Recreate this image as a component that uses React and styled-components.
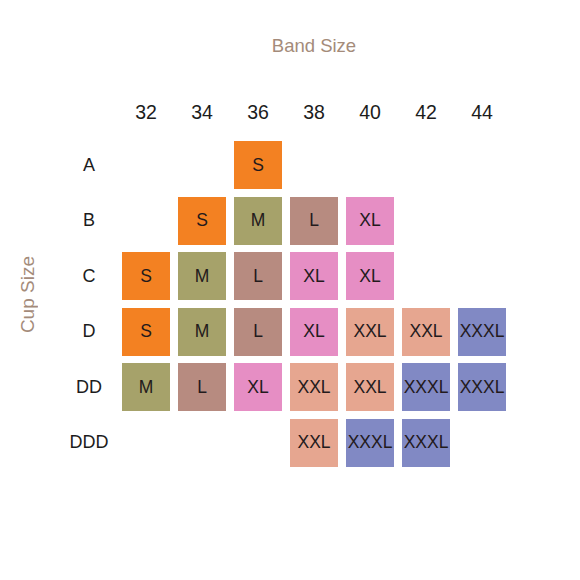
import React from 'react'
import styled, { createGlobalStyle } from 'styled-components'

const GlobalStyle = createGlobalStyle`
body{
  margin: 0;
  background: #fff;
  font-family: 'Liberation Sans', Arial, sans-serif;
}
`

const Page = styled.div`
width: 580px;
height: 580px;
padding-top: 34px;
box-sizing: border-box;
background: #fff;
`

const Title = styled.h2`
margin: 0 0 0 122px;
width: 384px;
height: 24px;
line-height: 24px;
text-align: center;
font-size: 18.5px;
font-weight: 400;
color: #a48b7a;
`

const Body = styled.div`
display: flex;
margin-top: 42px;
`

const CupAxis = styled.div`
width: 56px;
padding-top: 22px;
display: flex;
align-items: center;
justify-content: center;
`

const CupTitle = styled.h2`
margin: 0;
writing-mode: vertical-rl;
transform: rotate(180deg);
font-size: 19px;
font-weight: 400;
color: #a48b7a;
`

const Chart = styled.div`
margin-left: 8px;
display: grid;
grid-template-columns: 50px repeat(7, 48px);
grid-template-rows: 33.5px repeat(6, 48px);
column-gap: 8px;
row-gap: 7.5px;
`

const BandLabel = styled.div`
height: 24px;
line-height: 24px;
text-align: center;
font-size: 19.5px;
color: #1c1c1c;
`

const CupLabel = styled.div`
display: flex;
align-items: center;
justify-content: center;
font-size: 18px;
color: #1c1c1c;
`

const colors = {
  S: '#f38122',
  M: '#a6a26a',
  L: '#b78b80',
  XL: '#e68ec4',
  XXL: '#e6a690',
  XXXL: '#8189c4',
}

const Cell = styled.div`
display: flex;
align-items: center;
justify-content: center;
background: ${props => props.size ? colors[props.size] : 'transparent'};
font-size: 17.5px;
color: #231a1c;
white-space: nowrap;
`

const bands = ['32', '34', '36', '38', '40', '42', '44']

const rows = [
  ['A', [null, null, 'S', null, null, null, null]],
  ['B', [null, 'S', 'M', 'L', 'XL', null, null]],
  ['C', ['S', 'M', 'L', 'XL', 'XL', null, null]],
  ['D', ['S', 'M', 'L', 'XL', 'XXL', 'XXL', 'XXXL']],
  ['DD', ['M', 'L', 'XL', 'XXL', 'XXL', 'XXXL', 'XXXL']],
  ['DDD', [null, null, null, 'XXL', 'XXXL', 'XXXL', null]],
]

const App = () => {
  return (
    <Page>
      <GlobalStyle />
      <Title>Band Size</Title>
      <Body>
        <CupAxis>
          <CupTitle>Cup Size</CupTitle>
        </CupAxis>
        <Chart>
          <div />
          {bands.map(b => <BandLabel key={b}>{b}</BandLabel>)}
          {rows.map(([cup, cells]) => (
            <React.Fragment key={cup}>
              <CupLabel>{cup}</CupLabel>
              {cells.map((size, i) => <Cell key={i} size={size}>{size}</Cell>)}
            </React.Fragment>
          ))}
        </Chart>
      </Body>
    </Page>
  )
}

export default App
